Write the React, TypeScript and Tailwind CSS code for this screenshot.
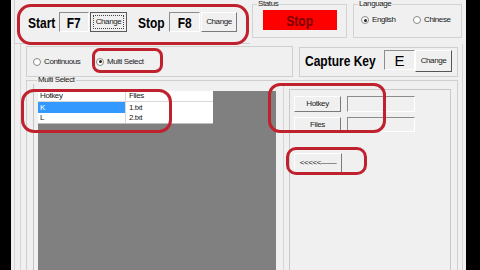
const ring = "absolute border-[3px] border-[#c0212e]";

const raised =
  "border border-t-[#ffffff] border-l-[#ffffff] border-r-[#7a7a7a] border-b-[#7a7a7a] bg-[#f0f0f0]";
const sunken =
  "border border-t-[#8c8c8c] border-l-[#8c8c8c] border-r-[#ffffff] border-b-[#ffffff] bg-[#f0f0f0]";

const Big = ({ children, origin = "origin-left" }: { children: string; origin?: string }) => (
  <span
    className={`inline-block scale-x-[0.8] whitespace-nowrap text-[15px] font-bold leading-none ${origin}`}
  >
    {children}
  </span>
);

const Small = ({ children, className = "" }: { children: string; className?: string }) => (
  <span
    className={`whitespace-nowrap text-[8px] leading-none tracking-[-0.4px] text-[#1a1a1a] ${className}`}
  >
    {children}
  </span>
);

const Radio = ({ on, label }: { on?: boolean; label: string }) => (
  <div className="flex items-center gap-[3px]">
    <div className="flex h-[8px] w-[8px] items-center justify-center rounded-full border border-[#8a8a8a] bg-white">
      {on && <div className="h-[3px] w-[3px] rounded-full bg-[#222]" />}
    </div>
    <Small>{label}</Small>
  </div>
);

export default function App() {
  return (
    <div className="relative flex h-[270px] w-[480px] overflow-hidden bg-black font-['Liberation_Sans',Arial,sans-serif] text-black">
      <div className="w-[11px] shrink-0" />
      <div className="flex h-full w-[455px] shrink-0 flex-col bg-[#f0f0f0] pl-[3px] pr-[3px]">
        {/* top row */}
        <div className="flex h-[44px] shrink-0">
          <div className="flex w-[236px] items-start border-b border-l border-[#cfcfcf] pl-[13px] pt-[12px]">
            <div className="flex h-[20px] w-[31px] items-center">
              <Big>Start</Big>
            </div>
            <div className={`flex h-[20px] w-[30px] items-center justify-center ${sunken}`}>
              <Big origin="origin-center">F7</Big>
            </div>
            <div className="ml-[1px] flex h-[20px] w-[37px] items-center justify-center border border-[#5a5a5a] bg-[#f0f0f0]">
              <div className="flex h-[14px] w-[31px] items-center justify-center border border-dotted border-[#444]">
                <Small>Change</Small>
              </div>
            </div>
            <div className="ml-[11px] flex h-[20px] w-[31px] items-center">
              <Big>Stop</Big>
            </div>
            <div className={`flex h-[20px] w-[31px] items-center justify-center ${sunken}`}>
              <Big origin="origin-center">F8</Big>
            </div>
            <div className={`ml-[1px] flex h-[20px] w-[36px] items-center justify-center ${raised}`}>
              <Small>Change</Small>
            </div>
          </div>

          <fieldset className="ml-[2px] h-[38px] w-[95px] border border-[#d3d3d3]">
            <legend className="ml-[4px] px-[1px]">
              <Small className="block leading-[10px]">Status</Small>
            </legend>
            <div className="ml-[10px] mt-[2px] flex h-[20px] w-[74px] items-center justify-center bg-[#ff0000] text-[#7a0000]">
              <Big origin="origin-center">Stop</Big>
            </div>
          </fieldset>

          <fieldset className="ml-[6px] h-[38px] w-[109px] border border-[#d3d3d3]">
            <legend className="ml-[4px] px-[1px]">
              <Small className="block leading-[10px]">Language</Small>
            </legend>
            <div className="ml-[7px] mt-[7px] flex h-[10px] items-center">
              <div className="w-[52px]">
                <Radio on label="English" />
              </div>
              <Radio label="Chinese" />
            </div>
          </fieldset>
        </div>

        {/* lower frames */}
        <div className="flex min-h-0 flex-1 border-l border-r border-[#d6d6d6] pl-[5px]">
          <div className="flex min-h-0 flex-1 flex-col border-l border-[#d6d6d6] pl-[5px]">
            <div className="mt-[2px] flex h-[31px] shrink-0">
              <div className="flex w-[267px] items-center border border-[#cfcfcf] pl-[6px]">
                <div className="w-[63px]">
                  <Radio label="Continuous" />
                </div>
                <Radio on label="Multi Select" />
              </div>
              <div className="ml-[6px] mt-[1px] flex h-[30px] w-[159px] items-start border border-[#cfcfcf] pl-[5px] pt-[2px]">
                <div className="flex h-[20px] w-[79px] items-center">
                  <Big>Capture Key</Big>
                </div>
                <div className={`flex h-[20px] w-[31px] items-center justify-center ${sunken}`}>
                  <span className="text-[15px] leading-none">E</span>
                </div>
                <div className={`flex h-[22px] w-[37px] items-center justify-center ${raised} border-r-[#555] border-b-[#555]`}>
                  <Small>Change</Small>
                </div>
              </div>
            </div>

            <fieldset className="-mt-[1px] flex min-h-0 w-[432px] flex-1 border border-b-0 border-[#cfcfcf] pl-[6px]">
              <legend className="ml-[4px] px-[1px]">
                <Small className="block leading-[8px]">Multi Select</Small>
              </legend>
              <div className="flex h-full">
                <div className="flex h-full border-l border-[#c4c4c4] pl-[4px]">
                  <div className="mt-[7px] h-[200px] w-[238px] bg-[#808080]">
                    <div className="w-[175px] bg-white">
                      <div className="flex h-[11px] border-b border-[#d8d8d8]">
                        <div className="flex w-[88px] items-center border-r border-[#d8d8d8] pl-[2px]">
                          <Small>Hotkey</Small>
                        </div>
                        <div className="flex items-center pl-[3px]">
                          <Small>Files</Small>
                        </div>
                      </div>
                      <div className="flex h-[11px]">
                        <div className="flex w-[88px] items-center border-r border-[#d8d8d8] bg-[#3399ff] pl-[2px]">
                          <Small className="text-white">K</Small>
                        </div>
                        <div className="flex items-center pl-[3px]">
                          <Small>1.txt</Small>
                        </div>
                      </div>
                      <div className="flex h-[11px] border-b border-[#bdbdbd]">
                        <div className="flex w-[88px] items-center border-r border-[#d8d8d8] pl-[2px]">
                          <Small>L</Small>
                        </div>
                        <div className="flex items-center pl-[3px]">
                          <Small>2.txt</Small>
                        </div>
                      </div>
                    </div>
                  </div>
                </div>
                <div className="ml-[7px] flex h-full w-[174px] border-l border-[#d6d6d6] pl-[5px] pr-[6px]">
                  <div className="mt-[5px] flex flex-1 flex-col border-l border-r border-t border-[#c8c8c8] pl-[4px] pt-[6px]">
                    <div className="flex">
                      <div className={`flex h-[16px] w-[47px] items-center justify-center ${raised}`}>
                        <Small>Hotkey</Small>
                      </div>
                      <div className={`ml-[6px] h-[16px] w-[68px] ${sunken}`} />
                    </div>
                    <div className="mt-[5px] flex">
                      <div className={`flex h-[15px] w-[47px] items-center justify-center ${raised}`}>
                        <Small>Files</Small>
                      </div>
                      <div className={`ml-[6px] h-[15px] w-[68px] ${sunken}`} />
                    </div>
                    <div className={`mt-[21px] flex h-[20px] w-[48px] items-center justify-center ${raised}`}>
                      <Small>{"<<<<<——"}</Small>
                    </div>
                  </div>
                </div>
              </div>
            </fieldset>
          </div>
        </div>
      </div>
      <div className="flex-1" />

      {/* red annotation marks */}
      <div className={`${ring} left-[17px] top-[4px] h-[41px] w-[232px] rounded-[14px]`} />
      <div className={`${ring} left-[92px] top-[48px] h-[25px] w-[71px] rounded-[8px]`} />
      <div className={`${ring} left-[21px] top-[89px] h-[44px] w-[151px] rounded-[13px]`} />
      <div className={`${ring} left-[268px] top-[83px] h-[50px] w-[118px] rounded-[12px]`} />
      <div className={`${ring} left-[286px] top-[147px] h-[28px] w-[81px] rounded-[10px]`} />
    </div>
  );
}
